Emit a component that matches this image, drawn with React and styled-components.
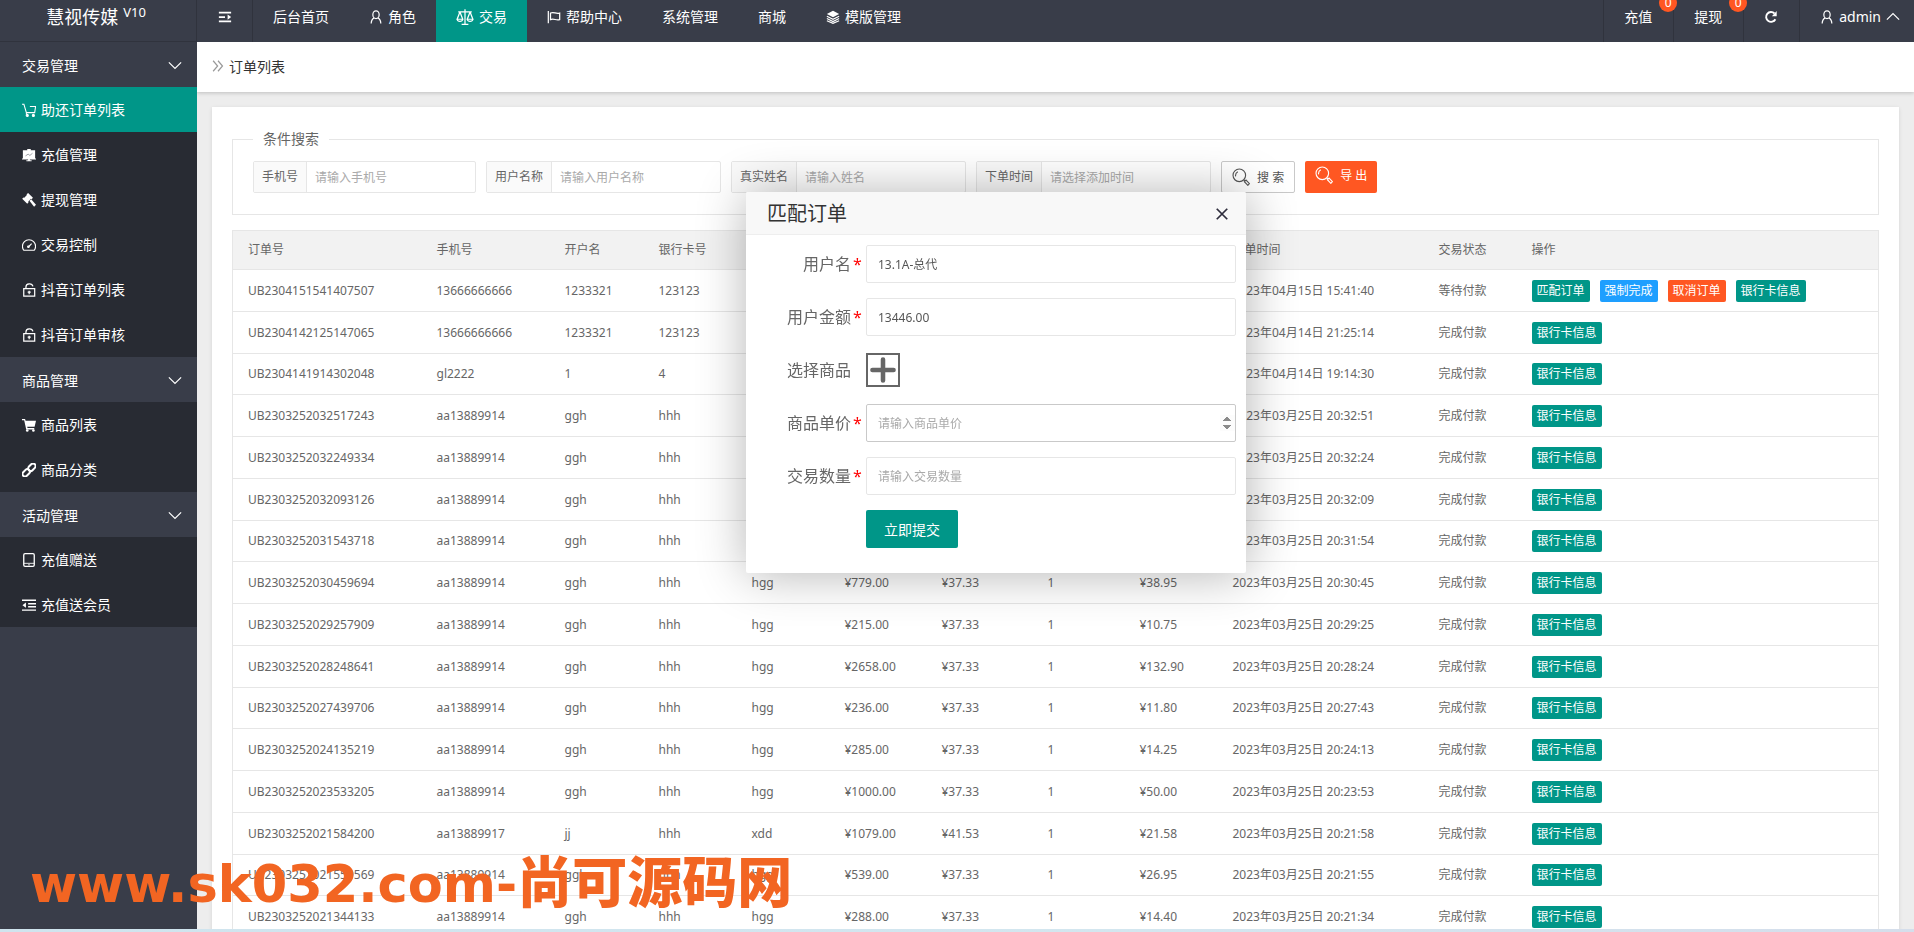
import React from "react";
import styled, { createGlobalStyle, css } from "styled-components";

const GlobalStyle = createGlobalStyle`
  *, *::before, *::after { box-sizing: border-box; }
  html, body { margin: 0; padding: 0; }
  body {
    background: #ededed;
    color: #666;
    font: 12px/1.5 "Noto Sans", "Noto Sans CJK SC", sans-serif;
  }
  button, input { font-family: inherit; }
  a { color: inherit; text-decoration: none; }
`;

const TEAL = "#009688";
const DARK = "#393d49";
const LINE = "#e6e6e6";

/* ---------- icons ---------- */

const Svg = styled.svg`
  display: block;
  flex: none;
  fill: none;
  stroke: currentColor;
  stroke-width: 1;
`;

const shapes = {
  toggle: <g strokeWidth="2"><path d="M1 3h14M1 8h7M1 13h14" /><path d="M11 5v6l4-3z" fill="currentColor" stroke="none" /></g>,
  user: <g strokeWidth="1.4"><ellipse cx="8" cy="5.4" rx="3.6" ry="4.4" /><path d="M2.5 15.5c0-3.5 1.5-5.5 3.5-6.500M13.500 15.500c0-3.500-1.500-5.500-3.500-6.500" /></g>,
  scales: <g strokeWidth="1.1"><path d="M8 1v13M5 14.500h6M2 3.500h12M3.500 3.500L1 10h5L3.500 3.500M12.500 3.500L10 10h5L12.500 3.500M1 10c.5 2.500 4.500 2.500 5 0M10 10c.5 2.500 4.500 2.500 5 0" /></g>,
  flag: <g strokeWidth="1.4"><path d="M1.500 1v14M4 3.500c4-2 6 1.500 10.500 0v7.500c-4.500 1.500-6.500-2-10.500 0z" /></g>,
  layers: <g strokeWidth="1.3"><path d="M8 .8l7 3.700-7 3.700-7-3.700z" fill="currentColor" stroke="none" /><path d="M1 7.200l7 3.500 7-3.500M1 9.700l7 3.500 7-3.500M1 12.200l7 3 7-3" /></g>,
  refresh: <g strokeWidth="2.2"><path d="M13 10.500A5.600 5.600 0 1 1 12 4" /><path d="M14.500 1v6H9z" fill="currentColor" stroke="none" /></g>,
  cart: <g strokeWidth="1.2"><path d="M0 1.500h2.200l2.800 9.500h9.500L15.500 4H9M5 11v2" /><circle cx="6" cy="14.200" r="1.200" fill="currentColor" /><circle cx="13" cy="14.200" r="1.200" fill="currentColor" /></g>,
  board: <g><path d="M1 2.500h14V12h1v1H9v1h2v1H5v-1h2v-1H0v-1h1zM6 1h4v2H6z" fill="currentColor" stroke="none" /><path d="M4 9l3-2 2 1.500L12 6" stroke="#777a82" strokeWidth=".8" /></g>,
  gavel: <g fill="currentColor" stroke="none"><path d="M7 0l5.500 5.500-1.500 1.500-.8-.3-3 3 .3 1L6 12.200.2 6.500 1.700 5l.9.300 3-3-.3-.8z" /><path d="M8.500 8.800L10.500 7l5.500 6.500-2.200 2.300z" /></g>,
  gauge: <g strokeWidth="1.3"><path d="M2 14h12c1-1.300 1.500-3 1.500-4.500C15.500 5 12 2 8 2S.5 5 .5 9.500C.5 11 1 12.700 2 14zM7.500 10L11 6.500" /><circle cx="7.300" cy="10" r=".9" /></g>,
  lock: <g strokeWidth="1.4"><path d="M2 6.500h12.500V15H2zM4.500 6.500V4.500C4.500 0 11.500-.2 12.500 3.800M8.200 8.800v4M6.500 10.500h3.500" /></g>,
  cartFull: <g fill="currentColor" stroke="none"><path d="M0 1h3.500l.6 2H16l-1.600 7H6l.3 1.500H14V13H4.800L2.500 2.600H0z" /><circle cx="6" cy="14.300" r="1.500" /><circle cx="13" cy="14.300" r="1.500" /></g>,
  link: <g strokeWidth="2.300"><rect x="6.500" y="2" width="9.500" height="5.800" rx="2.900" transform="rotate(-45 11.200 4.800)" /><rect x="0" y="8.300" width="9.500" height="5.800" rx="2.900" transform="rotate(-45 4.800 11.200)" /></g>,
  phone: <g strokeWidth="1.500"><rect x="2" y=".8" width="12" height="14.400" rx="1.500" /><path d="M2 11.800h12M7 13.500h2" strokeWidth="1" /></g>,
  indent: <g strokeWidth="1.600"><path d="M0 2.500h16M7 6.500h9M7 10h9M0 13.800h16" /><path d="M4.500 5.200v6L.5 8.200z" fill="currentColor" stroke="none" /></g>,
  down: <path d="M1 5l7 7 7-7" strokeWidth="1.400" />,
  up: <path d="M1 11l7-7 7 7" strokeWidth="1.400" />,
  double: <path d="M1.500 1l6 7-6 7M8 1l6 7-6 7" strokeWidth="1.600" />,
  close: <path d="M2 2l12 12M14 2L2 14" strokeWidth="2" />,
  search: <g><circle cx="6.500" cy="6.500" r="5.600" /><path d="M3.200 7.500c-.3-2 .5-3.500 2-4.200M10.500 10.500l1.200 1.200M11 12.200l1.500-1.500 3 3.200-1.400 1.500z" /></g>,
  plus: <path d="M8 1.500v13M1.500 8h13" strokeWidth="2.800" strokeLinecap="round" />,
};

const Icon = ({ name, size = 14 }) => (
  <Svg width={size} height={size} viewBox="0 0 16 16" aria-hidden="true">{shapes[name]}</Svg>
);

/* ---------- page frame ---------- */

const Page = styled.div`
  display: grid;
  grid-template: 42px 1fr 3px / 197px minmax(0, 1fr);
  height: 100vh;
  overflow: hidden;
`;

const Logo = styled.h1`
  display: flex;
  align-items: center;
  justify-content: center;
  gap: 5px;
  margin: 0;
  padding: 0 4px 8px 0;
  background: ${DARK};
  border-right: 1px solid #30333d;
  border-bottom: 1px solid #30333d;
  color: #fff;
  font-size: 18px;
  font-weight: 400;
  line-height: 34px;
`;

const Version = styled.sup`
  align-self: flex-start;
  font-size: 13px;
  line-height: 24px;
`;

const TopBar = styled.header`
  display: flex;
  justify-content: space-between;
  background: ${DARK};
  color: #fff;
  font-size: 14px;
`;

const TopNav = styled.nav`
  display: flex;
`;

const itemBase = css`
  position: relative;
  display: flex;
  align-items: center;
  gap: 5px;
  white-space: nowrap;
  line-height: 34px;
`;

const TopLink = styled.a`
  ${itemBase}
  padding: 0 20px 8px;
  background: ${(p) => (p.$active ? TEAL : "transparent")};
`;

const Toggle = styled.button`
  ${itemBase}
  padding: 0 20px 8px 21px;
  border: 0;
  border-right: 1px solid #30333d;
  background: none;
  color: #fff;
`;

const ToolLink = styled.a`
  ${itemBase}
  padding: 0 21px 8px 20px;
  border-left: 1px solid #30333d;

  &:last-child { padding-right: 14px; }
`;

const Badge = styled.span`
  position: absolute;
  top: -6px;
  right: -4px;
  width: 18px;
  height: 18px;
  border-radius: 50%;
  background: #ff5722;
  font-size: 12px;
  line-height: 18px;
  text-align: center;
  z-index: 1;
`;

/* ---------- sidebar ---------- */

const Side = styled.nav`
  background: ${DARK};
  color: #fff;
  font-size: 14px;
`;

const Group = styled.button`
  display: flex;
  align-items: center;
  justify-content: space-between;
  width: 100%;
  height: 45px;
  padding: 0 15px 0 22px;
  border: 0;
  background: ${DARK};
  color: #fff;
  font-size: 14px;
`;

const SideLink = styled.a`
  display: flex;
  align-items: center;
  gap: 5px;
  height: 45px;
  padding: 0 22px;
  background: ${(p) => (p.$active ? TEAL : "#282b33")};
`;

/* ---------- content ---------- */

const Main = styled.main`
  display: flex;
  flex-direction: column;
  min-height: 0;
  overflow: hidden;
`;

const Crumb = styled.div`
  display: flex;
  align-items: center;
  flex: none;
  gap: 5px;
  height: 50px;
  padding: 0 15px 2px;
  background: #fff;
  box-shadow: 0 1px 4px rgba(0, 0, 0, 0.2);
  color: #333;
  font-size: 14px;

  svg { color: #999; }
`;

const Card = styled.section`
  flex: none;
  margin: 15px;
  padding: 20px;
  background: #fff;
  box-shadow: 0 1px 4px rgba(0, 0, 0, 0.1);
`;

const Search = styled.fieldset`
  margin: 0 0 15px;
  padding: 10px 20px 21px;
  border: 1px solid ${LINE};
`;

const Legend = styled.legend`
  padding: 0 10px;
  font-size: 14px;
  line-height: 24px;
`;

const SearchRow = styled.form`
  display: flex;
  gap: 10px;
`;

const Field = styled.div`
  display: flex;
  height: 32px;
  border: 1px solid ${LINE};
  border-radius: 2px;
`;

const FieldLabel = styled.label`
  padding: 0 8px;
  border-right: 1px solid ${LINE};
  background: #fafafa;
  line-height: 30px;
  white-space: nowrap;
`;

const FieldInput = styled.input`
  width: 168px;
  padding: 0 8px;
  border: 0;
  background: none;
  color: #666;
  font-size: 12px;
  outline: none;

  &::placeholder { color: #aaa; }
`;

const SearchButton = styled.button`
  display: flex;
  align-items: center;
  gap: 7px;
  height: 32px;
  padding: 0 10px;
  border: 1px solid #c9c9c9;
  border-radius: 2px;
  background: #fff;
  color: #555;
  font-size: 12px;
`;

const ExportButton = styled(SearchButton)`
  padding-bottom: 4px;
  border: 0;
  background: #ff5722;
  color: #fff;
`;

const Table = styled.table`
  width: 100%;
  table-layout: fixed;
  border-collapse: collapse;
  border: 1px solid ${LINE};
`;

const Th = styled.th`
  width: ${(p) => (p.$w ? p.$w + "px" : "auto")};
  height: 39px;
  padding: 0 15px;
  background: #f2f2f2;
  font-weight: 400;
  text-align: left;
  white-space: nowrap;
`;

const Row = styled.tr`
  height: 42px;
  border-top: 1px solid ${LINE};

  &:nth-child(4n + 3) { height: 41px; }
`;

const Td = styled.td`
  padding: 0 15px;
  white-space: nowrap;
`;

const Actions = styled.div`
  display: flex;
  gap: 10px;
`;

const ActionButton = styled.button`
  height: 22px;
  padding: 0 5px;
  border: 0;
  border-radius: 2px;
  background: ${(p) => p.$color};
  color: #fff;
  font-size: 12px;
  line-height: 22px;
`;

/* ---------- dialog ---------- */

const Dialog = styled.section`
  position: fixed;
  top: 192px;
  left: calc(50% - 211px);
  width: 500px;
  border-radius: 2px;
  background: #fff;
  box-shadow: 1px 1px 50px rgba(0, 0, 0, 0.3);
  z-index: 5;
`;

const DialogHead = styled.header`
  display: flex;
  align-items: center;
  justify-content: space-between;
  height: 43px;
  padding: 2px 17px 0 21px;
  border-bottom: 1px solid #eee;
  border-radius: 2px 2px 0 0;
  background: #f8f8f8;
  color: #333;
`;

const DialogTitle = styled.h2`
  margin: 0;
  font-size: 20px;
  font-weight: 400;
  line-height: 40px;
`;

const IconButton = styled.button`
  display: flex;
  padding: 0;
  border: 0;
  background: none;
  color: #2e2d3c;
`;

const DialogForm = styled.form`
  display: flex;
  flex-direction: column;
  gap: 15px;
  padding: 10px 10px 25px 0;
`;

const FormRow = styled.div`
  display: grid;
  grid-template-columns: 120px minmax(0, 1fr);
  align-items: center;
  height: 38px;
`;

const FormLabel = styled.label`
  display: flex;
  justify-content: flex-end;
  font-size: 16px;
  line-height: 24px;
`;

const Star = styled.span`
  width: 15px;
  padding-left: 2px;
  color: #f00;
`;

const FormInput = styled.input`
  width: 100%;
  height: 38px;
  padding: 0 0 0 11px;
  border: 1px solid ${(p) => (p.$strong ? "#c9c9c9" : LINE)};
  border-radius: 2px;
  color: #555;
  font-size: 12px;
  outline: none;

  &::placeholder { color: #aaa; }
  &::-webkit-inner-spin-button { opacity: 1; }
`;

const AddButton = styled.button`
  display: flex;
  align-items: center;
  justify-content: center;
  width: 34px;
  height: 34px;
  padding: 0;
  border: 2px solid #666;
  background: #fff;
  color: #666;
`;

const Submit = styled.button`
  grid-column: 2;
  justify-self: start;
  height: 38px;
  padding: 0 18px;
  border: 0;
  border-radius: 2px;
  background: ${TEAL};
  color: #fff;
  font-size: 14px;
`;

/* ---------- overlays ---------- */

const Watermark = styled.div`
  position: fixed;
  left: 30px;
  bottom: 15px;
  display: flex;
  align-items: baseline;
  color: #f26522;
  font: 700 51px/64px "DejaVu Sans", sans-serif;
  white-space: nowrap;
  pointer-events: none;
  z-index: 6;
`;

const WatermarkName = styled.span`
  font: 900 55px/64px "Noto Sans CJK SC", sans-serif;
`;

const BottomStrip = styled.footer`
  grid-column: 1 / -1;
  background: linear-gradient(90deg, #cfe4ee, #d3e6ef 60%, #d5deeb);
`;

/* ---------- data ---------- */

const topLinks = [
  { text: "后台首页" },
  { text: "角色", icon: "user" },
  { text: "交易", icon: "scales", size: 18, active: true },
  { text: "帮助中心", icon: "flag" },
  { text: "系统管理" },
  { text: "商城" },
  { text: "模版管理", icon: "layers" },
];

const sideGroups = [
  ["交易管理", [["cart", "助还订单列表"], ["board", "充值管理"], ["gavel", "提现管理"], ["gauge", "交易控制"], ["lock", "抖音订单列表"], ["lock", "抖音订单审核"]]],
  ["商品管理", [["cartFull", "商品列表"], ["link", "商品分类"]]],
  ["活动管理", [["phone", "充值赠送"], ["indent", "充值送会员"]]],
];

const filters = [
  ["phone", "手机号", "请输入手机号"],
  ["user", "用户名称", "请输入用户名称"],
  ["name", "真实姓名", "请输入姓名"],
  ["time", "下单时间", "请选择添加时间"],
];

const columns = [
  ["订单号", 189], ["手机号", 128], ["开户名", 94], ["银行卡号", 93], ["", 93], ["", 97],
  ["", 106], ["", 92], ["", 93], ["下单时间", 206], ["交易状态", 93], ["操作"],
];

const orders = [
  ["UB2304151541407507", "13666666666", "1233321", "123123", "", "", "", "", "", "2023年04月15日 15:41:40"],
  ["UB2304142125147065", "13666666666", "1233321", "123123", "", "", "", "", "", "2023年04月14日 21:25:14"],
  ["UB2304141914302048", "gl2222", "1", "4", "", "", "", "", "", "2023年04月14日 19:14:30"],
  ["UB2303252032517243", "aa13889914", "ggh", "hhh", "", "", "", "", "", "2023年03月25日 20:32:51"],
  ["UB2303252032249334", "aa13889914", "ggh", "hhh", "", "", "", "", "", "2023年03月25日 20:32:24"],
  ["UB2303252032093126", "aa13889914", "ggh", "hhh", "", "", "", "", "", "2023年03月25日 20:32:09"],
  ["UB2303252031543718", "aa13889914", "ggh", "hhh", "", "", "", "", "", "2023年03月25日 20:31:54"],
  ["UB2303252030459694", "aa13889914", "ggh", "hhh", "hgg", "¥779.00", "¥37.33", "1", "¥38.95", "2023年03月25日 20:30:45"],
  ["UB2303252029257909", "aa13889914", "ggh", "hhh", "hgg", "¥215.00", "¥37.33", "1", "¥10.75", "2023年03月25日 20:29:25"],
  ["UB2303252028248641", "aa13889914", "ggh", "hhh", "hgg", "¥2658.00", "¥37.33", "1", "¥132.90", "2023年03月25日 20:28:24"],
  ["UB2303252027439706", "aa13889914", "ggh", "hhh", "hgg", "¥236.00", "¥37.33", "1", "¥11.80", "2023年03月25日 20:27:43"],
  ["UB2303252024135219", "aa13889914", "ggh", "hhh", "hgg", "¥285.00", "¥37.33", "1", "¥14.25", "2023年03月25日 20:24:13"],
  ["UB2303252023533205", "aa13889914", "ggh", "hhh", "hgg", "¥1000.00", "¥37.33", "1", "¥50.00", "2023年03月25日 20:23:53"],
  ["UB2303252021584200", "aa13889917", "jj", "hhh", "xdd", "¥1079.00", "¥41.53", "1", "¥21.58", "2023年03月25日 20:21:58"],
  ["UB2303252021559569", "aa13889914", "ggh", "hhh", "hgg", "¥539.00", "¥37.33", "1", "¥26.95", "2023年03月25日 20:21:55"],
  ["UB2303252021344133", "aa13889914", "ggh", "hhh", "hgg", "¥288.00", "¥37.33", "1", "¥14.40", "2023年03月25日 20:21:34"],
];

const pendingActions = [["匹配订单", TEAL], ["强制完成", "#1e9fff"], ["取消订单", "#ff5722"]];

/* ---------- parts ---------- */

const Header = () => (
  <TopBar>
    <TopNav>
      <Toggle type="button" aria-label="菜单"><Icon name="toggle" /></Toggle>
      {topLinks.map((l) => (
        <TopLink key={l.text} href="#" $active={l.active}>
          {l.icon && <Icon name={l.icon} size={l.size} />}
          {l.text}
        </TopLink>
      ))}
    </TopNav>
    <TopNav>
      <ToolLink href="#">充值<Badge>0</Badge></ToolLink>
      <ToolLink href="#">提现<Badge>0</Badge></ToolLink>
      <ToolLink href="#" aria-label="刷新"><Icon name="refresh" /></ToolLink>
      <ToolLink href="#"><Icon name="user" />admin<Icon name="up" /></ToolLink>
    </TopNav>
  </TopBar>
);

const Sidebar = () => (
  <Side>
    {sideGroups.map(([title, items], g) => (
      <React.Fragment key={title}>
        <Group type="button">{title}<Icon name="down" /></Group>
        {items.map(([icon, text], i) => (
          <SideLink key={text} href="#" $active={g === 0 && i === 0}><Icon name={icon} />{text}</SideLink>
        ))}
      </React.Fragment>
    ))}
  </Side>
);

const Orders = () => (
  <Table>
    <thead>
      <tr>{columns.map(([text, w], i) => <Th key={i} $w={w}>{text}</Th>)}</tr>
    </thead>
    <tbody>
      {orders.map((cells, r) => (
        <Row key={cells[0]}>
          {cells.map((c, i) => <Td key={i}>{c}</Td>)}
          <Td>{r === 0 ? "等待付款" : "完成付款"}</Td>
          <Td>
            <Actions>
              {r === 0 && pendingActions.map(([t, c]) => <ActionButton key={t} type="button" $color={c}>{t}</ActionButton>)}
              <ActionButton type="button" $color={TEAL}>银行卡信息</ActionButton>
            </Actions>
          </Td>
        </Row>
      ))}
    </tbody>
  </Table>
);

const MatchDialog = () => (
  <Dialog role="dialog" aria-labelledby="match-title">
    <DialogHead>
      <DialogTitle id="match-title">匹配订单</DialogTitle>
      <IconButton type="button" aria-label="关闭"><Icon name="close" /></IconButton>
    </DialogHead>
    <DialogForm>
      <FormRow>
        <FormLabel htmlFor="m-user">用户名<Star>*</Star></FormLabel>
        <FormInput id="m-user" defaultValue="13.1A-总代" />
      </FormRow>
      <FormRow>
        <FormLabel htmlFor="m-money">用户金额<Star>*</Star></FormLabel>
        <FormInput id="m-money" defaultValue="13446.00" />
      </FormRow>
      <FormRow>
        <FormLabel htmlFor="m-goods">选择商品<Star /></FormLabel>
        <AddButton id="m-goods" type="button"><Icon name="plus" size={26} /></AddButton>
      </FormRow>
      <FormRow>
        <FormLabel htmlFor="m-price">商品单价<Star>*</Star></FormLabel>
        <FormInput id="m-price" type="number" placeholder="请输入商品单价" $strong />
      </FormRow>
      <FormRow>
        <FormLabel htmlFor="m-count">交易数量<Star>*</Star></FormLabel>
        <FormInput id="m-count" placeholder="请输入交易数量" />
      </FormRow>
      <FormRow>
        <Submit type="button">立即提交</Submit>
      </FormRow>
    </DialogForm>
  </Dialog>
);

export default function App() {
  return (
    <>
      <GlobalStyle />
      <Page>
        <Logo>慧视传媒<Version>V10</Version></Logo>
        <Header />
        <Sidebar />
        <Main>
          <Crumb><Icon name="double" size={12} />订单列表</Crumb>
          <Card>
            <Search>
              <Legend>条件搜索</Legend>
              <SearchRow>
                {filters.map(([id, label, hint]) => (
                  <Field key={id}>
                    <FieldLabel htmlFor={"f-" + id}>{label}</FieldLabel>
                    <FieldInput id={"f-" + id} placeholder={hint} />
                  </Field>
                ))}
                <SearchButton type="button"><Icon name="search" size={18} />搜 索</SearchButton>
                <ExportButton type="button"><Icon name="search" size={18} />导 出</ExportButton>
              </SearchRow>
            </Search>
            <Orders />
          </Card>
        </Main>
        <BottomStrip />
      </Page>
      <MatchDialog />
      <Watermark>www.sk032.com-<WatermarkName>尚可源码网</WatermarkName></Watermark>
    </>
  );
}
